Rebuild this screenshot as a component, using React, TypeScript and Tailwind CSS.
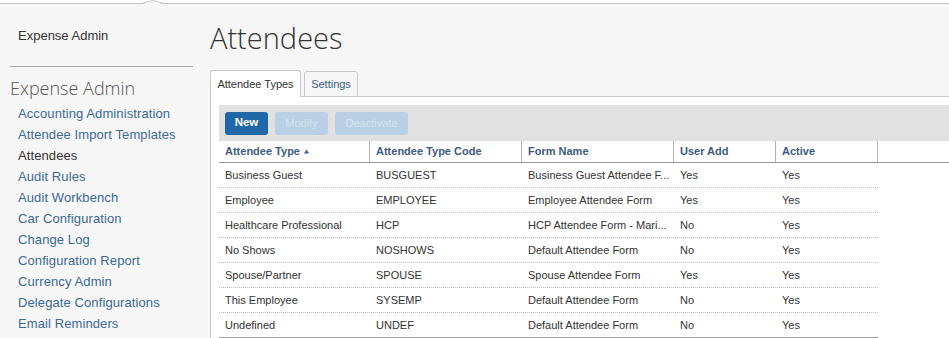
const links = [
  'Accounting Administration',
  'Attendee Import Templates',
  'Attendees',
  'Audit Rules',
  'Audit Workbench',
  'Car Configuration',
  'Change Log',
  'Configuration Report',
  'Currency Admin',
  'Delegate Configurations',
  'Email Reminders',
]

const rows = [
  ['Business Guest', 'BUSGUEST', 'Business Guest Attendee F...', 'Yes', 'Yes'],
  ['Employee', 'EMPLOYEE', 'Employee Attendee Form', 'Yes', 'Yes'],
  ['Healthcare Professional', 'HCP', 'HCP Attendee Form - Mari...', 'No', 'Yes'],
  ['No Shows', 'NOSHOWS', 'Default Attendee Form', 'No', 'Yes'],
  ['Spouse/Partner', 'SPOUSE', 'Spouse Attendee Form', 'Yes', 'Yes'],
  ['This Employee', 'SYSEMP', 'Default Attendee Form', 'No', 'Yes'],
  ['Undefined', 'UNDEF', 'Default Attendee Form', 'No', 'Yes'],
]

const cols = ['w-[151px]', 'w-[152px]', 'w-[152px]', 'w-[102px]', 'w-[102px]']
const headers = ['Attendee Type', 'Attendee Type Code', 'Form Name', 'User Add', 'Active']

const App = () => {
  return (
    <div className="relative w-[949px] h-[338px] overflow-hidden bg-[#f7f7f7] font-['Liberation_Sans',Arial,sans-serif] text-[#333]">
      <div className="h-[4px] bg-white border-b border-[#c4c4c4]" />
      <svg className="absolute left-[142px] top-0" width="22" height="5" viewBox="0 0 22 5">
        <polygon points="0,4.5 10.5,0.5 11.5,0.5 22,4.5" fill="#f7f7f7" />
        <polyline points="0,3.5 10.5,0.5 11.5,0.5 22,3.5" fill="none" stroke="#c4c4c4" strokeWidth="1" />
      </svg>

      <div className="flex">
        <div className="w-[210px] shrink-0 pl-[10px]">
          <div className="pt-[23px] pl-[8px] text-[13px] leading-[18px]">Expense Admin</div>
          <div className="mt-[21px] w-[183px] border-t border-[#a8a8a8]" />
          <div className="mt-[9px] text-[18px] leading-[24px] font-light text-[#555] font-['Open_Sans',sans-serif]">
            Expense Admin
          </div>
          <ul className="mt-[3px] pl-[8px]">
            {links.map((l) => (
              <li
                key={l}
                className={`text-[13px] leading-[21px] tracking-[0.1px] ${l === 'Attendees' ? 'text-[#333]' : 'text-[#3b6998]'}`}
              >
                {l}
              </li>
            ))}
          </ul>
        </div>

        <div className="flex-1 min-w-0">
          <h1 className="pt-[16px] text-[29px] leading-[36px] font-light text-[#333] font-['Open_Sans',sans-serif]">
            Attendees
          </h1>
          <div className="mt-[14px] flex gap-[3px] items-end relative z-10 -mb-px">
            <div className="h-[27px] w-[91px] border border-b-0 border-[#c8c8c8] bg-white rounded-t-[3px] flex items-center justify-center text-[11px] text-[#333]">
              Attendee Types
            </div>
            <div className="h-[26px] w-[54px] border border-[#c8c8c8] bg-[#f7f7f7] rounded-t-[3px] flex items-center justify-center text-[11px] text-[#3a5f8a]">
              Settings
            </div>
          </div>
          <div className="border-t border-l border-[#c8c8c8] bg-white pl-[8px] pt-[8px] h-[300px]">
            <div className="h-[36px] bg-[#e1e1e1] flex items-center gap-[7px] px-[6px]">
              <button className="h-[23px] w-[43px] rounded-[3px] bg-[#1f67a6] text-white text-[11.5px] font-bold">
                New
              </button>
              <button className="h-[23px] w-[53px] rounded-[3px] bg-[#b9d0e4] text-[#d5e3ef] text-[11px]">
                Modify
              </button>
              <button className="h-[23px] w-[73px] rounded-[3px] bg-[#b9d0e4] text-[#d5e3ef] text-[11px]">
                Deactivate
              </button>
            </div>

            <div className="flex h-[22px] border-b border-[#9a9a9a]">
              {headers.map((h, i) => (
                <div
                  key={h}
                  className={`${cols[i]} shrink-0 border-r border-[#b4b4b4] pl-[6px] flex items-center gap-[4px] text-[11px] font-bold text-[#3d5b80]`}
                >
                  {h}
                  {i === 0 && (
                    <svg width="5" height="5" viewBox="0 0 5 5">
                      <polygon points="2.5,0.5 5,4.5 0,4.5" fill="#3d5b80" />
                    </svg>
                  )}
                </div>
              ))}
            </div>

            <div className="w-[659px]">
              {rows.map((r, ri) => (
                <div
                  key={r[0]}
                  className={`flex h-[25px] ${ri === rows.length - 1 ? 'border-b border-solid border-[#a0a0a0]' : 'border-b border-dotted border-[#bdbdbd]'}`}
                >
                  {r.map((c, i) => (
                    <div key={i} className={`${cols[i]} shrink-0 pl-[6px] flex items-center text-[11px] text-[#333] whitespace-nowrap`}>
                      {c}
                    </div>
                  ))}
                </div>
              ))}
            </div>
          </div>
        </div>
      </div>
    </div>
  )
}

export default App
